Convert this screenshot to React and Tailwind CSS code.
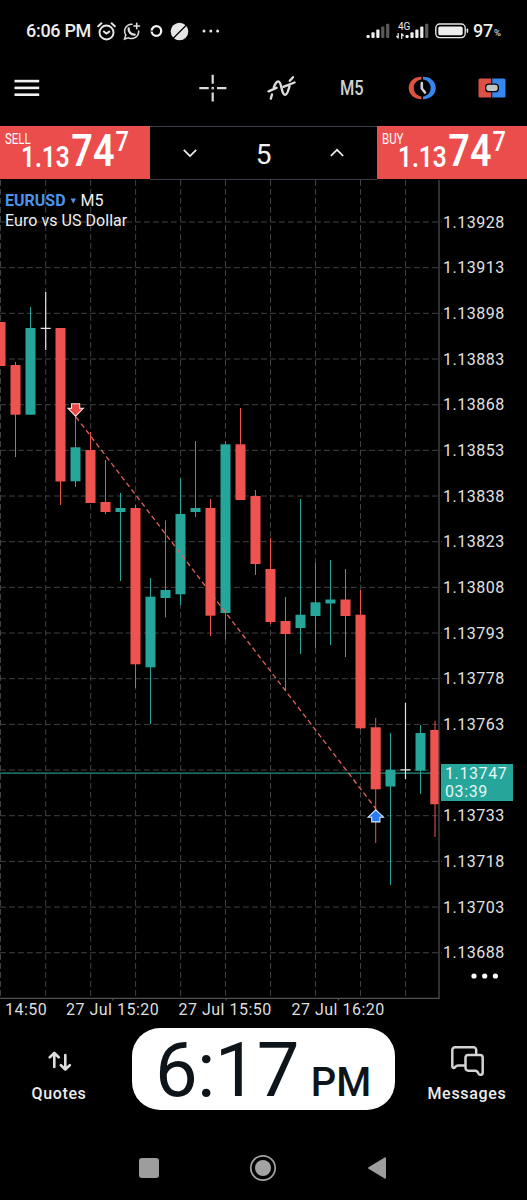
import React from 'react';

const RED = '#ef5350';
const GREEN = '#26a69a';

// [x, high, open/close top, open/close bottom, low, colour]
const candles = [
  [0.5, 322, 322, 366, 366, RED],
  [15.5, 362, 365, 414.7, 457, RED],
  [30.5, 307, 328, 414.7, 415, GREEN],
  [60.5, 328, 328, 481.5, 505, RED],
  [75.5, 416, 447.3, 481.3, 487, GREEN],
  [90.5, 432, 450, 503, 503, RED],
  [105.5, 460, 502, 512, 514, RED],
  [120.5, 493, 508, 512, 581, GREEN],
  [135.5, 505, 508, 664.3, 688, RED],
  [150.5, 578, 596.7, 667.3, 724, GREEN],
  [165.5, 520.5, 590, 598, 617.5, GREEN],
  [180.5, 478, 514, 594.3, 605, GREEN],
  [195.5, 441, 508, 512, 517, GREEN],
  [210.5, 499, 508, 615.7, 636, RED],
  [225.5, 441, 444.3, 613, 639, GREEN],
  [240.5, 408, 444.3, 500, 500, RED],
  [255.5, 490, 496, 564, 575, RED],
  [270.5, 538, 569, 622, 624, RED],
  [285.5, 597, 621, 634, 690, RED],
  [300.5, 499, 614.7, 628, 654, GREEN],
  [315.5, 563, 602.3, 616, 648, GREEN],
  [330.5, 560, 599.5, 603.5, 645, GREEN],
  [345.5, 569, 599.5, 616, 657, RED],
  [360.5, 590, 614.7, 728.3, 729, RED],
  [375.7, 718, 727.3, 789.3, 843, RED],
  [390.5, 733, 769.7, 786.5, 885, GREEN],
  [420.5, 725, 733, 770.7, 794, GREEN],
];

const prices = [
  '1.13928', '1.13913', '1.13898', '1.13883', '1.13868', '1.13853', '1.13838', '1.13823', '1.13808',
  '1.13793', '1.13778', '1.13763', '', '1.13733', '1.13718', '1.13703', '1.13688',
];

const gridX = [0.5, 45.7, 90.7, 135.6, 180.6, 225.5, 270.5, 315.5, 360.5, 405.5];
const gridY = prices.map((_, i) => 222 + i * 45.67);

function SignalBars({ lit, total }) {
  return (
    <svg width="24" height="16" viewBox="0 0 24 16">
      {Array.from({ length: total }).map((_, i) => (
        <rect key={i} x={i * 4.9 + 0.5} y={12 - i * 2.8} width="3.2" height={3 + i * 2.8} rx="1" fill={i < lit ? '#eee' : '#5a5a5a'} />
      ))}
    </svg>
  );
}

function StatusBar() {
  return (
    <div className="h-[62px] flex items-center text-[#ececec]">
      <span className="ml-[26px] w-[70px] text-[18px] font-medium leading-none tracking-[-0.3px] whitespace-nowrap">6:06 PM</span>
      <svg className="ml-px" width="19" height="19" viewBox="0 0 19 19" fill="none" stroke="#e8e8e8" strokeWidth="1.9" strokeLinecap="round">
        <circle cx="9.5" cy="10.5" r="7" />
        <path d="M1.2 4.3 4.4 1.3M17.8 4.3 14.6 1.3M6.8 9.6l2.5 2 3-2" />
      </svg>
      <svg className="ml-[7px]" width="18" height="19" viewBox="0 0 18 19" fill="none" stroke="#dedede" strokeWidth="1.5" strokeLinecap="round">
        <path d="M9 2.2A7 7 0 0 0 2.8 13L1.5 17l4-1.2A7 7 0 0 0 15.6 9" />
        <path d="M13.7 1.2v5.6M10.9 4h5.6" strokeWidth="1.6" />
        <path d="M5.7 6.3c-.6 3.6 2.4 6.6 6 6.3" strokeWidth="2.3" />
      </svg>
      <svg className="ml-[8px]" width="14" height="14" viewBox="0 0 14 14" fill="none" stroke="#f3f3f3">
        <circle cx="7.4" cy="7" r="4.8" strokeWidth="2.3" />
        <path d="M1.3 7h3" stroke="#000" strokeWidth="1" />
      </svg>
      <svg className="ml-[7px]" width="19" height="19" viewBox="0 0 19 19">
        <circle cx="9.5" cy="9.5" r="8.8" fill="#e6e6e6" />
        <path d="M2.5 17 17 2.5" stroke="#000" strokeWidth="1.2" />
      </svg>
      <svg className="ml-[13px]" width="18" height="4" viewBox="0 0 18 4" fill="#e6e6e6">
        <circle cx="2" cy="2" r="1.5" />
        <circle cx="8.8" cy="2" r="1.5" />
        <circle cx="15.6" cy="2" r="1.5" />
      </svg>
      <div className="ml-[146px]">
        <SignalBars lit={3} total={5} />
      </div>
      <div className="relative ml-[15px]">
        <SignalBars lit={4} total={5} />
        <span className="absolute -left-[7px] -top-[1px] bg-black pr-px text-[10px] leading-[10px]">4G</span>
        <svg className="absolute -left-[9px] top-[10px]" width="9" height="6" viewBox="0 0 9 6" stroke="#ddd" strokeWidth="1.3" fill="none">
          <path d="M2.2 0v5.5M.3 2.8 2.2 5M5.7 6V.3M7.6 3 5.7.6" />
        </svg>
      </div>
      <svg className="ml-[6px]" width="34" height="16" viewBox="0 0 34 16">
        <rect x="0.8" y="1" width="29.4" height="13.6" rx="4" fill="none" stroke="#e8e8e8" strokeWidth="1.4" />
        <rect x="3.3" y="3.4" width="24.4" height="8.8" rx="1.6" fill="#eee" />
        <rect x="31.6" y="5.5" width="1.6" height="4.4" rx="0.8" fill="#e8e8e8" />
      </svg>
      <span className="ml-[4px] text-[18px] font-medium leading-none tracking-[-0.3px]">97</span>
      <span className="ml-px pt-[4px] text-[9.5px] leading-none">%</span>
    </div>
  );
}

function Toolbar() {
  return (
    <div className="h-[64px] flex items-center pb-[12px]">
      <svg className="ml-[14px]" width="26" height="18" viewBox="0 0 26 18" fill="#f2f2f2">
        <rect x="0.5" y="0.8" width="24.7" height="2.6" />
        <rect x="0.5" y="7.6" width="24.7" height="2.6" />
        <rect x="0.5" y="14.4" width="24.7" height="2.6" />
      </svg>
      <svg className="ml-[159px]" width="28" height="28" viewBox="0 0 28 28" stroke="#dcdcdc" strokeWidth="2.2">
        <path d="M13.7.8v9M13.7 18.4v9M.3 14.2h9.4M18 14.2h9.4" />
        <circle cx="13.7" cy="14.2" r="0.5" strokeWidth="1.8" />
      </svg>
      <svg className="ml-[40px]" width="30" height="26" viewBox="0 0 30 26" fill="none" stroke="#dcdcdc" strokeWidth="2.4" strokeLinecap="round" strokeLinejoin="round">
        <path d="M3.8 23.6 5 19.5M6.8 12.5C8.2 8.5 9.5 6.5 11.2 6.5c4.2 0 2.5 13.3 6.9 13.3 2.5 0 3.2-4.800 4.400-8.600M22.800 5.800 26 2.200" />
        <path d="M1.500 16.300 9.500 12.800M16.300 11.800 27.500 7.500" />
      </svg>
      <div className="ml-[43px] w-[26px] pt-[2px]">
        <span className="block origin-left scale-x-[0.840] text-[19.500px] font-medium leading-none text-[#cfcfcf]">M5</span>
      </div>
      <svg className="ml-[42px]" width="28" height="24" viewBox="0 0 28 24" fill="none">
        <path d="M13.500.8C6 .8.700 5.600.700 12S6 23.200 13.500 23.200V20.400C9.500 20 5.800 17 5.800 12S9.500 4 13.500 3.600Z" fill="#dd5145" />
        <path d="M15 .8C22.500.8 27.800 5.600 27.800 12S22.500 23.200 15 23.200V20.400C19 20 22.700 17 22.700 12S19 4 15 3.600Z" fill="#3587ef" />
        <path d="M13.800 7v5.500l3.200 4" stroke="#cfcfcf" strokeWidth="2.600" strokeLinecap="round" strokeLinejoin="round" />
      </svg>
      <svg className="ml-[42px]" width="28" height="20" viewBox="0 0 28 20">
        <path d="M2 .5h11.300v19H2A1.500 1.500 0 0 1 .5 18V2A1.500 1.500 0 0 1 2 .5Z" fill="#dd5145" />
        <path d="M14.200.5H26A1.500 1.500 0 0 1 27.500 2v16a1.500 1.500 0 0 1-1.500 1.500H14.200Z" fill="#3587ef" />
        <rect x="7.700" y="6.100" width="12.600" height="7.600" rx="3" fill="#bfc4c4" stroke="#000" strokeWidth="1.300" />
      </svg>
    </div>
  );
}

function PriceButton({ label }) {
  return (
    <div className="relative w-[150px] h-[53px] bg-[#eb4d4c] text-white">
      <span className="absolute left-[5px] top-[6px] text-[14px] leading-[14px] origin-left scale-x-[0.820]">{label}</span>
      <div className="ml-[21px] flex items-start origin-left scale-x-[0.840] font-semibold">
        <span className="mt-[16px] text-[29px] leading-[30px]">1.13</span>
        <span className="ml-[2px] mt-[2px] text-[45px] leading-[46px]">74</span>
        <span className="ml-px mt-[2px] text-[28px] leading-[28px] font-medium">7</span>
      </div>
    </div>
  );
}

function TradeBar() {
  return (
    <div className="h-[54px] flex">
      <PriceButton label="SELL" />
      <div className="flex-1 h-[54px] flex items-center justify-between border-y border-[#3d4048] px-[32px]">
        <svg width="16" height="10" viewBox="0 0 16 10" fill="none" stroke="#f0f0f0" strokeWidth="1.700">
          <path d="M1.800 1.800 8 8l6.200-6.200" />
        </svg>
        <span className="text-[28px] leading-none pt-[3px] text-[#f2f2f2]">5</span>
        <svg width="16" height="10" viewBox="0 0 16 10" fill="none" stroke="#f0f0f0" strokeWidth="1.700">
          <path d="M1.800 8 8 1.800 14.200 8" />
        </svg>
      </div>
      <PriceButton label="BUY" />
    </div>
  );
}

function Chart() {
  return (
    <div className="relative h-[818px] flex">
      {/* Drawing keeps screen coordinates, so the viewBox starts at y=180 */}
      <svg className="block shrink-0" width="442" height="822" viewBox="0 180 442 822">
        <g stroke="#414245" strokeWidth="1" strokeDasharray="5.800 3.200">
          {gridX.map((x) => (
            <line key={x} x1={x} x2={x} y1="180" y2="998" />
          ))}
          {gridY.map((y) => (
            <line key={y} x1="0" x2="442" y1={y} y2={y} />
          ))}
        </g>
        <path d="M439 180V998.300M0 998.300H439.500M113 998v2.500M226 998v2.500M338.500 998v2.500" stroke="#505256" strokeWidth="1.200" fill="none" />

        <line x1="0" x2="439" y1="773.200" y2="773.200" stroke="#2b8f83" strokeWidth="1.300" />

        {candles.map(([x, high, top, bottom, low, color]) => (
          <g key={x} fill={color}>
            <rect x={x - 0.5} y={high} width="1" height={low - high} />
            <rect x={x - 5} y={top} width="10" height={bottom - top} />
          </g>
        ))}
        <path d="M434.500 721h1v116h-1zM430.300 730h8.200v74.200h-8.200z" fill={RED} />
        <path d="M45.700 292v58M40.700 328.300h10M405.500 703v76M400.500 769.800h10" stroke="#e4e4e4" strokeWidth="1.200" />

        <line x1="76" y1="417" x2="376" y2="809" stroke="#e0625c" strokeWidth="1.300" strokeDasharray="5 3.300" />

        <path d="M71.500 403.800h8.200v4.600h3.600l-7.700 7.800-7.700-7.800h3.600z" fill="#ec4a48" stroke="#f4dede" strokeWidth="1.100" />
        <path d="M371.700 821.900h8.200v-4.700h3.600l-7.700-7.400-7.700 7.400h3.600z" fill="#2a7cf0" stroke="#dbe9fb" strokeWidth="1.100" />
      </svg>

      <div className="pt-[20px] pl-px text-[16px] tracking-[0.500px] text-[#e2e2e2]">
        {prices.map((p, i) => (
          <div key={i} className="h-[45.670px] flex items-center leading-none">{p}</div>
        ))}
        <svg className="ml-[28px] -mt-[3px]" width="28" height="6" viewBox="0 0 28 6" fill="#fff">
          <circle cx="3" cy="3" r="2.600" />
          <circle cx="13.700" cy="3" r="2.600" />
          <circle cx="24.400" cy="3" r="2.600" />
        </svg>
      </div>

      {/* Current price tag */}
      <div className="absolute left-[441px] top-[584px] w-[72px] h-[37px] bg-[#26a69a] pl-[4px] pt-px text-[16px] leading-[18px] tracking-[0.600px] text-[#e4f5f3]">
        <div>1.13747</div>
        <div>03:39</div>
      </div>

      <div className="absolute left-[5px] top-[11px] text-[16px] leading-[20px] text-[#f0f0f0]">
        <div className="flex items-center">
          <span className="font-bold text-[#4b93ee]">EURUSD</span>
          <svg className="mx-[4px]" width="7" height="6" viewBox="0 0 7 6" fill="#4b93ee">
            <path d="M.5.5h5.500L3.300 5.500z" />
          </svg>
          <span>M5</span>
        </div>
        <div className="tracking-[0.050px]">Euro vs US Dollar</div>
      </div>
    </div>
  );
}

function TimeAxis() {
  return (
    <div className="h-[30px] flex pt-[3px] pl-[5px] text-[16px] leading-[18px] tracking-[0.500px] text-[#dedede] whitespace-nowrap">
      <span className="w-[61px]">14:50</span>
      <span className="w-[112.500px]">27 Jul 15:20</span>
      <span className="w-[113px]">27 Jul 15:50</span>
      <span>27 Jul 16:20</span>
    </div>
  );
}

function BottomTabs() {
  return (
    <div className="h-[106px] flex text-[#ececec]">
      <div className="w-[118px] flex flex-col items-center">
        <svg className="mt-[22px] ml-[2px]" width="24" height="22" viewBox="0 0 24 22" fill="none" stroke="#dedede" strokeWidth="2.600" strokeLinecap="round" strokeLinejoin="round">
          <path d="M6.300 17V3M1.800 7.300 6.300 3l4.400 4.300M17.300 5v14M12.900 15.200l4.400 4.300L21.800 15.200" />
        </svg>
        <span className="mt-[12px] text-[16px] font-medium leading-[20px] tracking-[0.650px]">Quotes</span>
      </div>
      <div className="ml-[14px] w-[263px] h-[82px] rounded-[28px] bg-white text-[#0e151a] flex items-baseline pl-[23px] whitespace-nowrap">
        <span className="text-[76px] leading-[85px] tracking-[-0.700px]">6:17</span>
        <span className="ml-[12px] text-[40px] font-medium leading-none">PM</span>
      </div>
      <div className="ml-[13px] w-[118px] flex flex-col items-center">
        <svg className="mt-[17px]" width="34" height="32" viewBox="0 0 34 32" fill="none" stroke="#d4d4d4" strokeWidth="2.500" strokeLinejoin="round" strokeLinecap="round">
          <path d="M26.200 8.500V5A2.700 2.700 0 0 0 23.500 2.300H5A2.700 2.700 0 0 0 2.300 5V21.500c0 1.800 1.800 1.700 2.800.6.900-1 1.600-1.500 3-1.500h6" />
          <path d="M18.200 9.900h11.800a2.700 2.700 0 0 1 2.700 2.700V27.500c0 2.800-3.500 3-4.300.9-.6-1.700-1.200-2.700-3.200-2.700H18.200a2.700 2.700 0 0 1-2.700-2.700V12.600a2.700 2.700 0 0 1 2.700-2.700Z" />
        </svg>
        <span className="mt-[7px] text-[16px] font-medium leading-[20px] tracking-[0.700px]">Messages</span>
      </div>
    </div>
  );
}

function SystemNav() {
  return (
    <div className="h-[66px] flex items-center pt-[2px]">
      <div className="ml-[139px] w-[20px] h-[20px] rounded-[3px] bg-[#9d9d9d]" />
      <svg className="ml-[90px]" width="28" height="28" viewBox="0 0 28 28">
        <circle cx="14" cy="14" r="12.200" fill="none" stroke="#a3a3a3" strokeWidth="1.700" />
        <circle cx="14" cy="14" r="8" fill="#a3a3a3" />
      </svg>
      <svg className="ml-[90px]" width="20" height="24" viewBox="0 0 20 24" fill="#9d9d9d">
        <path d="M1.500 11.200 17.700 1.500Q19 .8 19 2.300V21.700Q19 23.200 17.700 22.500L1.500 12.800Q.3 12 1.500 11.200Z" />
      </svg>
    </div>
  );
}

export default function App() {
  return (
    <div className="w-[527px] h-[1200px] bg-black overflow-hidden font-['Roboto',sans-serif]">
      <StatusBar />
      <Toolbar />
      <TradeBar />
      <Chart />
      <TimeAxis />
      <BottomTabs />
      <SystemNav />
    </div>
  );
}
